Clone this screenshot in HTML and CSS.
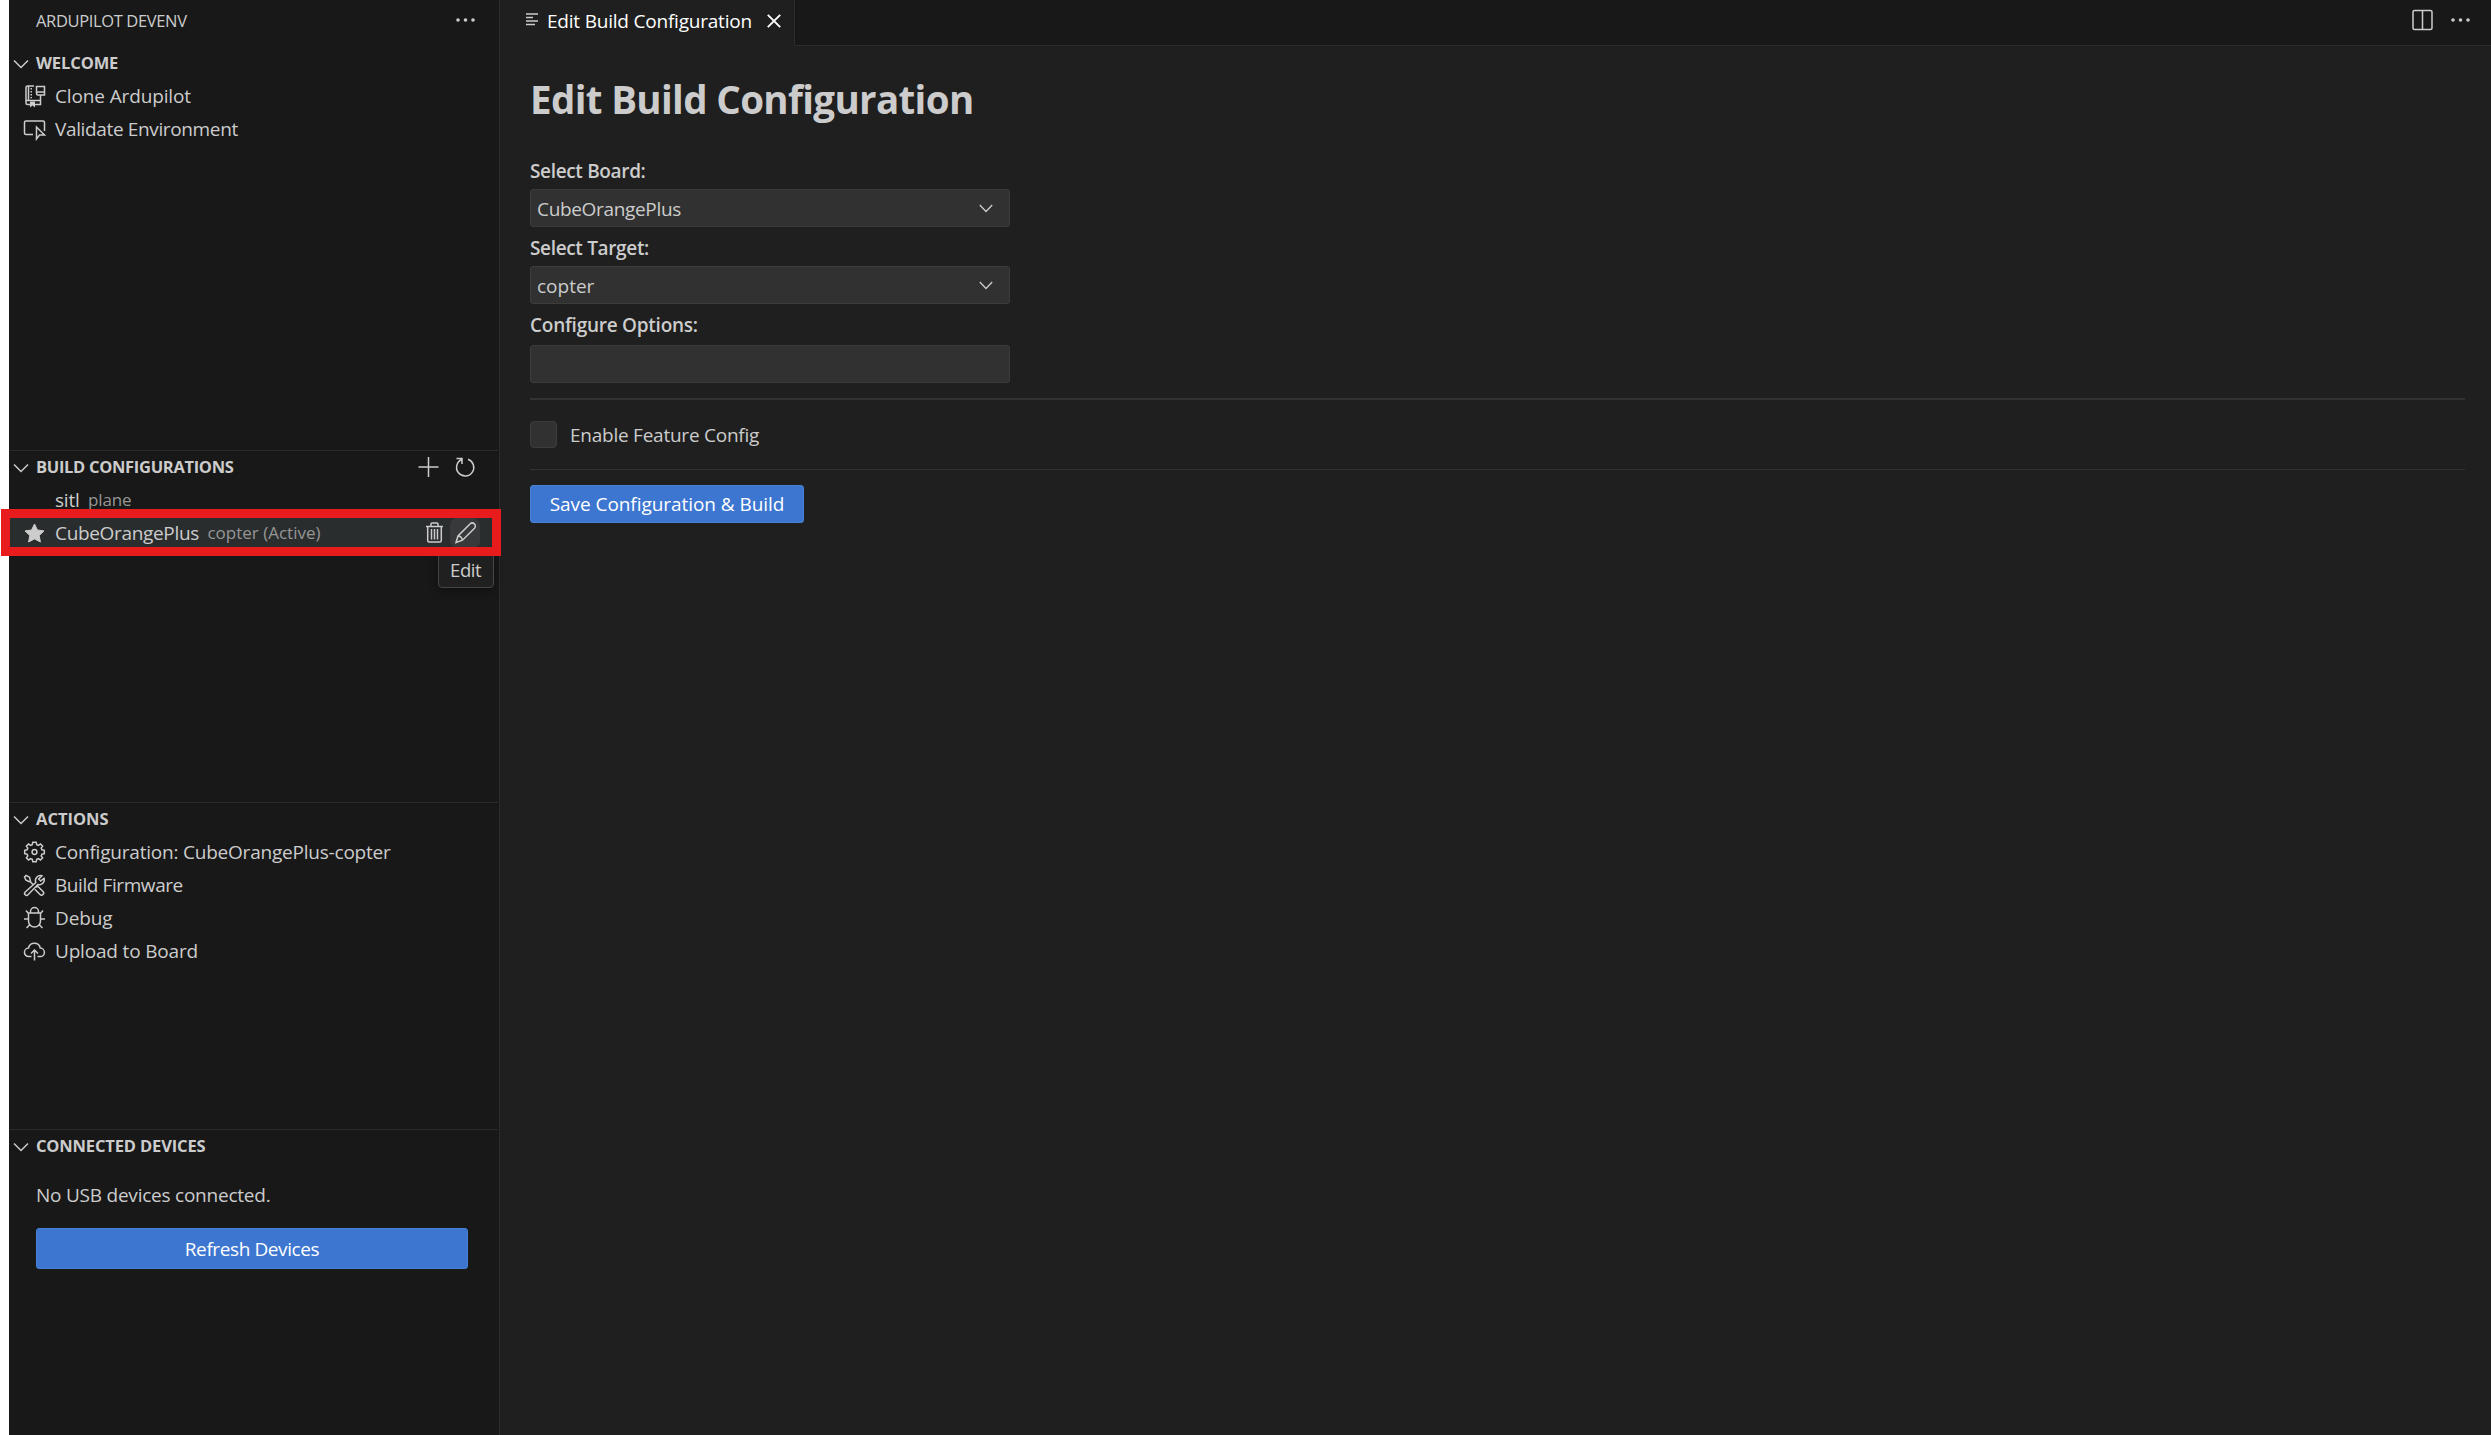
FILE: index.html
```html
<!DOCTYPE html>
<html lang="en">
<head>
<meta charset="utf-8">
<title>Edit Build Configuration</title>
<link rel="stylesheet" href="styles.css">
</head>
<body>
<div class="window">
  <aside class="sidebar">
    <header class="sidebar-title">
      <span class="sidebar-name">ARDUPILOT DEVENV</span>
      <svg class="icon" viewBox="0 0 24 24"><g class="solid"><circle cx="5" cy="12" r="1.8"/><circle cx="12.5" cy="12" r="1.8"/><circle cx="20" cy="12" r="1.8"/></g></svg>
    </header>

    <section class="pane pane-welcome">
      <h2 class="pane-header"><svg class="chevron" viewBox="0 0 16 10"><path d="M1 1.5l7 7 7-7"/></svg><span class="t-welcome">WELCOME</span></h2>
      <div class="row">
        <svg class="icon" viewBox="0 0 24 24"><path d="M12 2H5.5A1.5 1.5 0 0 0 4 3.500V19a1.500 1.500 0 0 0 1.500 1.500H8M6.500 2v14M4.500 16.500h14v4H13M14.500 9.500V2.500h8v8.500h-6.500a1.500 1.500 0 0 1 0-3h6.500M18.500 11v5.500"/><path class="solid" d="M8 17.500h5v6l-2.500-2-2.500 2zM8.500 4h1.500v1.500H8.500zM8.500 7h1.500v1.500H8.500zM8.500 10h1.500v1.500H8.500zM8.500 13h1.500v1.200H8.500z"/></svg>
        <span class="t-clone">Clone Ardupilot</span>
      </div>
      <div class="row">
        <svg class="icon" viewBox="0 0 24 24"><path d="M11 17.500H4A1.500 1.500 0 0 1 2.500 16V5.500A1.500 1.500 0 0 1 4 4h17a1.500 1.500 0 0 1 1.500 1.500V14M14.500 10v12l3-4h5z"/></svg>
        <span class="t-validate">Validate Environment</span>
      </div>
    </section>

    <section class="pane pane-builds">
      <h2 class="pane-header"><svg class="chevron" viewBox="0 0 16 10"><path d="M1 1.500l7 7 7-7"/></svg><span class="t-builds">BUILD CONFIGURATIONS</span>
        <span class="pane-actions">
          <svg class="icon" viewBox="0 0 24 24"><path d="M12.500 2v20M2.500 12h20"/></svg>
          <svg class="icon" viewBox="0 0 24 24"><path d="M3.500 3.500h5.500v5.500M15 4.300a8.600 8.600 0 1 1-6.200.2"/></svg>
        </span>
      </h2>
      <div class="row">
        <span class="icon"></span>
        <span class="t-sitl">sitl</span><span class="desc t-plane">plane</span>
      </div>
      <div class="row row-active">
        <svg class="icon" viewBox="0 0 24 24"><path class="solid star" d="M12.500 3l2.900 6 6.600.9-4.800 4.600 1.200 6.500-5.900-3.100-5.900 3.100 1.200-6.500L3 9.900 9.600 9z"/></svg>
        <span class="t-cube">CubeOrangePlus</span><span class="desc t-active">copter (Active)</span>
        <span class="row-actions">
          <span class="action"><svg class="icon" viewBox="0 0 24 24"><path d="M4 5.500h17M9 5V3a1 1 0 0 1 1-1h5a1 1 0 0 1 1 1v2M5.700 6v13.500a1.500 1.500 0 0 0 1.500 1.500h10.600a1.500 1.500 0 0 0 1.500-1.500V6M9.500 8v10.500M12.500 8v10.500M15.500 8v10.500"/></svg></span>
          <span class="action action-hover"><svg class="icon" viewBox="0 0 24 24"><path d="M3 21.500l2-6.500L17 3a3 3 0 0 1 4.500 4.200l-12 12zM5 15q3.500 0 4.500 4.200"/></svg></span>
        </span>
        <div class="tooltip">Edit</div>
        <div class="callout"></div>
      </div>
    </section>

    <section class="pane pane-tasks">
      <h2 class="pane-header"><svg class="chevron" viewBox="0 0 16 10"><path d="M1 1.500l7 7 7-7"/></svg><span>ACTIONS</span></h2>
      <div class="row">
        <svg class="icon" viewBox="0 0 24 24"><g transform="translate(12.500 12)"><path d="M-1.700-9.800H1.700L2.200-7.400 4-6.700 5.900-8.100 8.100-5.900 6.700-4 7.400-2.200 9.800-1.700V1.700L7.400 2.200 6.700 4 8.100 5.900 5.900 8.100 4 6.700 2.200 7.400 1.700 9.800H-1.700L-2.200 7.400-4 6.700-5.900 8.100-8.100 5.900-6.700 4-7.400 2.200-9.800 1.700V-1.700L-7.400-2.200-6.700-4-8.100-5.900-5.900-8.100-4-6.700-2.200-7.400z"/><circle r="2.400"/></g></svg>
        <span class="t-config">Configuration: CubeOrangePlus-copter</span>
      </div>
      <div class="row">
        <svg class="icon" viewBox="0 0 24 24"><path d="M2.500 4L4 2.500 7.500 4.200 8.500 8 7 8.700 3.800 7zM8 8.500l3 3M14 14.500l1.500-1.500 5.500 5.500a2 2 0 0 1-3 3L12.800 16.200M19.800 2.800a5 5 0 0 0-6 6.700L3.200 19a1.900 1.900 0 0 0 2.800 2.800L15.800 11.500a5 5 0 0 0 6.200-6.300L18.700 8l-2-2z"/></svg>
        <span class="t-firmware">Build Firmware</span>
      </div>
      <div class="row">
        <svg class="icon" viewBox="0 0 24 24"><path d="M8.500 7V5.500a4 4 0 0 1 8 0V7M6.500 7h12v8a6 6 0 0 1-12 0zM6.500 7.500L4 4.500M18.500 7.500L21 4.500M6.500 13H2M18.500 13H23M8 18.500L4.500 22M17 18.500l3.500 3.500"/></svg>
        <span class="t-debug">Debug</span>
      </div>
      <div class="row">
        <svg class="icon" viewBox="0 0 24 24"><path d="M9.500 17.500H6.800a4.200 4.200 0 0 1-.3-8.400 6 6 0 0 1 11.800 0 4.200 4.200 0 0 1-.2 8.400H15.500M12.500 21.500V11M9 14.500l3.500-3.500 3.500 3.500"/></svg>
        <span class="t-upload">Upload to Board</span>
      </div>
    </section>

    <section class="pane pane-devices">
      <h2 class="pane-header"><svg class="chevron" viewBox="0 0 16 10"><path d="M1 1.500l7 7 7-7"/></svg><span class="t-devices">CONNECTED DEVICES</span></h2>
      <p class="device-note">No USB devices connected.</p>
      <button class="button button-refresh" type="button">Refresh Devices</button>
    </section>
  </aside>

  <main class="editor">
    <div class="tabs">
      <div class="tab">
        <svg class="tab-icon" viewBox="0 0 14 14"><path d="M0 1h12M0 4.500h7M0 8h12M0 11.500h9"/></svg>
        <span class="tab-label">Edit Build Configuration</span>
        <svg class="tab-close" viewBox="0 0 14 14"><path d="M.8.800l12.400 12.400M13.200.800L.8 13.200"/></svg>
      </div>
      <div class="tab-actions">
        <svg class="icon" viewBox="0 0 24 24"><rect x="3" y="2.500" width="19" height="19" rx="1.500"/><path d="M12.500 2.500v19"/></svg>
        <svg class="icon" viewBox="0 0 24 24"><g class="solid"><circle cx="5" cy="12" r="1.800"/><circle cx="12.500" cy="12" r="1.800"/><circle cx="20" cy="12" r="1.800"/></g></svg>
      </div>
    </div>
    <form class="form">
      <h1 class="form-title">Edit Build Configuration</h1>
      <label class="label">Select Board:</label>
      <div class="field"><span class="t-cube">CubeOrangePlus</span><svg class="field-chevron" viewBox="0 0 14 9"><path d="M.8 1l6.200 6.500L13.200 1"/></svg></div>
      <label class="label">Select Target:</label>
      <div class="field"><span>copter</span><svg class="field-chevron" viewBox="0 0 14 9"><path d="M.8 1l6.200 6.500L13.200 1"/></svg></div>
      <label class="label t-options">Configure Options:</label>
      <div class="field field-options"></div>
      <div class="rule rule-thick"></div>
      <div class="check"><span class="checkbox"></span><span class="check-label">Enable Feature Config</span></div>
      <div class="rule"></div>
      <button class="button button-save" type="button">Save Configuration &amp; Build</button>
    </form>
  </main>
</div>
</body>
</html>
```
FILE: styles.css
```css
* { box-sizing: border-box; }

body {
  margin: 0;
  background: #fff;
  color: #ccc;
  font: 19px/24px "Open Sans", "Noto Sans", sans-serif;
}

.window {
  display: flex;
  width: 2491px;
  height: 1435px;
  padding-left: 9px;
  overflow: hidden;
}

svg {
  display: block;
  flex: none;
  fill: none;
  stroke: currentColor;
  stroke-width: 1.5;
  overflow: visible;
}

.solid { fill: currentColor; stroke: none; }
.star { stroke: currentColor; stroke-linejoin: round; stroke-width: 1; }
.icon { width: 24px; height: 24px; flex: none; }

/* Sidebar */
.sidebar {
  display: flex;
  flex-direction: column;
  width: 491px;
  flex: none;
  background: #181818;
  border-right: 1px solid #2b2b2b;
}

.sidebar-title {
  display: flex;
  align-items: center;
  justify-content: space-between;
  height: 46px;
  padding: 0 22px 5px 27px;
  font-size: 16.5px;
  letter-spacing: -0.36px;
}

.sidebar-title .icon { position: relative; top: -1px; }

.pane {
  margin-right: 1px;
  border-top: 1px solid #2b2b2b;
}

.pane-welcome { height: 404px; border-top: 0; }
.pane-builds { height: 352px; }
.pane-tasks { height: 327px; }
.pane-devices { flex: 1; }

.pane-header {
  display: flex;
  align-items: center;
  height: 32px;
  margin: 0;
  padding-left: 4px;
  font-size: 16.5px;
  font-weight: 700;
}

.pane-welcome .pane-header { height: 33px; }
.chevron { width: 16px; height: 10px; margin: 2px 7px 0 0; }

.pane-actions {
  display: flex;
  gap: 13px;
  margin-left: auto;
  padding-right: 21px;
}

.row {
  display: flex;
  align-items: center;
  position: relative;
  height: 33px;
  padding-left: 13px;
}

.row > .icon { margin: 1px 9px 0 0; }
.row-active { background: #2a2d2e; }

.desc {
  margin: 1px 0 0 8.5px;
  color: #969696;
  font-size: 17px;
}

.row-actions {
  display: flex;
  gap: 1px;
  margin-left: auto;
  padding-right: 18px;
}

.action { padding: 3px; border-radius: 7px; }
.action-hover { background: #37393a; }

.tooltip {
  position: absolute;
  top: 37px;
  right: 4px;
  width: 56px;
  height: 35px;
  padding: 4px 0 0 11px;
  border: 1px solid #454545;
  border-radius: 4px;
  background: #202020;
  box-shadow: 0 2px 10px rgba(0, 0, 0, 0.4);
  font-size: 18.5px;
  letter-spacing: -0.4px;
}

.callout {
  position: absolute;
  top: -7px;
  left: -8px;
  width: 500px;
  height: 47px;
  border: 9px solid #e81c1c;
}

.device-note {
  margin: 21px 0 0;
  padding-left: 27px;
  letter-spacing: -0.23px;
}

.button {
  display: block;
  border: 1px solid #4a80d4;
  border-radius: 3px;
  background: #3c76d0;
  color: #fff;
  font: inherit;
}

.button-refresh {
  width: 432px;
  height: 41px;
  margin: 21px 0 0 27px;
  letter-spacing: -0.4px;
}

/* Editor */
.editor {
  display: flex;
  flex-direction: column;
  flex: 1;
  background: #1f1f1f;
}

.tabs {
  display: flex;
  justify-content: flex-end;
  height: 46px;
}

.tab {
  display: flex;
  align-items: center;
  width: 295px;
  padding: 0 0 5px 26px;
  border-right: 1px solid #2b2b2b;
  color: #fff;
}

.tab-icon { width: 14px; height: 14px; margin: -2px 7px 0 0; color: #ccc; }
.tab-label { width: 220px; letter-spacing: -0.21px; white-space: nowrap; }
.tab-close { width: 14px; height: 14px; stroke-width: 1.9; }

.tab-actions {
  display: flex;
  align-items: center;
  justify-content: flex-end;
  flex: 1;
  gap: 14px;
  padding: 0 19px 6px 0;
  border-bottom: 1px solid #2b2b2b;
  background: #181818;
}

.form { padding: 27px 26px 0 30px; }

.form-title {
  margin: 0 0 33px;
  font-size: 38.5px;
  font-weight: 700;
  line-height: 52px;
  letter-spacing: -0.65px;
}

.label {
  display: block;
  height: 26px;
  margin: 8px 0 5px;
  font-weight: 600;
  line-height: 26px;
  letter-spacing: -0.34px;
}

.t-options { letter-spacing: -0.25px; }

.field {
  display: flex;
  align-items: center;
  justify-content: space-between;
  width: 480px;
  height: 38px;
  padding: 1px 16px 0 6px;
  border: 1px solid #3c3c3c;
  border-radius: 3px;
  background: #313131;
}

.field-chevron { width: 14px; height: 9px; stroke-width: 1.3; }
.field-options { margin-top: 7px; }

.rule { height: 1px; background: #323232; }
.rule-thick { height: 2px; margin-top: 15px; }

.check {
  display: flex;
  align-items: center;
  gap: 13px;
  height: 27px;
  margin: 21px 0;
}

.checkbox {
  width: 27px;
  height: 27px;
  border: 1px solid #3c3c3c;
  border-radius: 4px;
  background: #313131;
}

.check-label { letter-spacing: -0.24px; }
.button-save { width: 274px; height: 38px; margin-top: 15px; padding: 0; letter-spacing: -0.06px; }

/* Tracking per caption */
.t-welcome { letter-spacing: -0.1px; }
.t-devices { letter-spacing: -0.15px; }
.t-builds { letter-spacing: -0.31px; }
.t-clone { letter-spacing: -0.13px; }
.t-validate { letter-spacing: -0.36px; }
.t-cube { letter-spacing: -0.33px; }
.t-sitl { letter-spacing: -0.23px; }
.t-plane { letter-spacing: -0.13px; }
.t-config { letter-spacing: -0.21px; }
.t-firmware { letter-spacing: -0.42px; }
.t-debug { letter-spacing: -0.1px; }
.t-upload { letter-spacing: -0.18px; }
```
